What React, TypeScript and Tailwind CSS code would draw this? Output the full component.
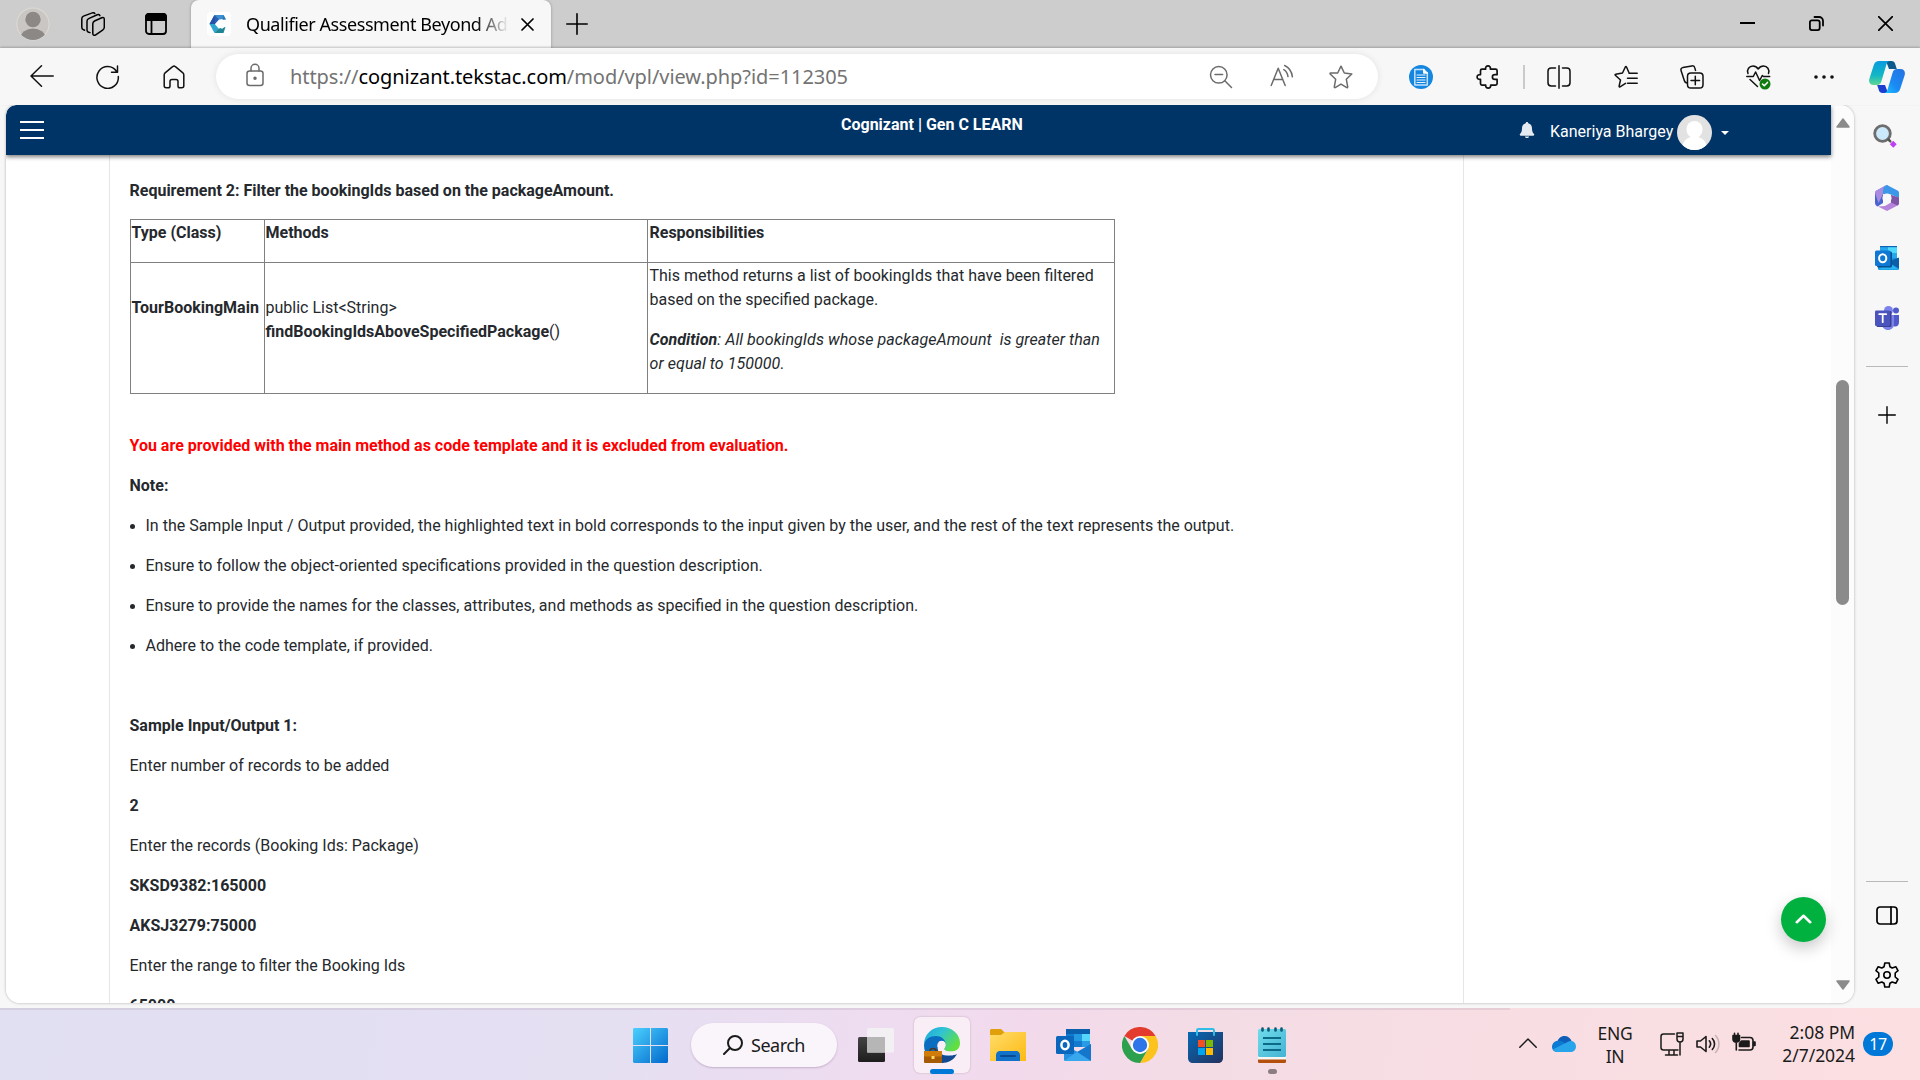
import React from "react";

type IconProps = {
  className: string;
  children: React.ReactNode;
  box?: string;
  stroke?: string;
  width?: number;
};

function Icon({ className, children, box = "0 0 24 24", stroke = "currentColor", width = 1.5 }: IconProps) {
  return (
    <svg
      className={"block shrink-0 " + className}
      viewBox={box}
      fill="none"
      stroke={stroke}
      strokeWidth={width}
      strokeLinecap="round"
      strokeLinejoin="round"
    >
      {children}
    </svg>
  );
}

function TabStrip() {
  return (
    <div className="flex h-12 items-start bg-[#cdcdcd] text-black">
      <Icon className="ml-4 mt-[7px] h-[34px] w-[34px]" box="0 0 34 34" stroke="none">
        <clipPath id="profile">
          <circle cx="17" cy="17" r="16" />
        </clipPath>
        <circle cx="17" cy="17" r="16.6" fill="#dedbd6" />
        <circle cx="17" cy="17" r="15.6" fill="#c9c6c3" />
        <g clipPath="url(#profile)">
          <circle cx="17" cy="12.5" r="7.7" fill="#8b8886" />
          <ellipse cx="17" cy="31" rx="12.5" ry="9.5" fill="#8b8886" />
        </g>
      </Icon>
      <Icon className="ml-[31px] mt-3 h-6 w-6">
        <path d="M11.800 11.800c0-1.300.6-2.200 1.700-2.800l7.300-3.300c1.400-.6 2.500.1 2.500 1.600v7.900c0 1.300-.6 2.200-1.700 2.900l-6.900 4.800c-1.500 1-2.900.3-2.900-1.500z" />
        <path d="M9 20.600 7.600 20.200C6.500 19.900 6 19 6 17.900V9.300c0-1.200.6-2.200 1.700-2.700l8.500-3.800c1.200-.5 2.200-.1 2.700.8" />
        <path d="M3.600 18.200 2.300 17.600C1.300 17.200.8 16.300.8 15.200V6.800c0-1.200.6-2.200 1.700-2.700L11.300.9c1.200-.4 2-.1 2.500.5" />
      </Icon>
      <Icon className="ml-10 mt-[13px] h-[22px] w-[22px]" box="0 0 22 22" width={1.8}>
        <rect x="1" y="1" width="20" height="20" rx="3" />
        <path d="M1 7V4a3 3 0 0 1 3-3h14a3 3 0 0 1 3 3v3z" fill="currentColor" />
        <path d="M6.500 7v14" />
      </Icon>
      <div className="relative ml-6 flex h-[49px] w-[360px] items-start rounded-t-[8px] bg-[#f7f7f7] shadow-[0_0_3px_rgba(0,0,0,0.3)] [clip-path:inset(0_-4px_0_-4px)]">
        <div className="ml-4 mt-3 flex h-6 w-6 items-center justify-center rounded-[4px] bg-white">
          <Icon className="h-5 w-5" box="0 0 20 20" stroke="none">
            <path d="M5.500 1h9L10 5.500 6 10H.5z" fill="#2b5fb4" />
            <path d="M5.500 1 .5 10l5.500 4V7z" fill="#2353a8" />
            <path d="M5.500 1h9l2 4-6.500.5z" fill="#3c8fd0" />
            <path d="M.5 10h5.300l4.200 5-4.500 4z" fill="#2da5cf" />
            <path d="M10 14.500 16.500 13l-2 6h-9z" fill="#1f8593" />
            <path d="M14.500 1 17 5.500l-4 .5z" fill="#2f7bb8" />
            <path d="M13 5 18.500 10 13 15 7.500 10z" fill="#fff" />
          </Icon>
        </div>
        <div className="ml-[15px] mt-[9px] h-[30px] w-[268px] whitespace-nowrap bg-gradient-to-r from-black from-[86%] to-transparent to-[98%] bg-clip-text font-['Noto_Sans',sans-serif] text-[18px] leading-[30px] tracking-[-0.42px] text-transparent">
          Qualifier Assessment Beyond Adv
        </div>
        <Icon className="ml-[7px] mt-[18px] h-[13px] w-[13px]" box="0 0 13 13" width={1.7}>
          <path d="M1 1l11 11M12 1 1 12" />
        </Icon>
      </div>
      <Icon className="ml-[15px] mt-[13px] h-[22px] w-[22px]" box="0 0 22 22" width={1.6}>
        <path d="M11 .8v20.400M.8 11h20.400" />
      </Icon>
      <div className="flex-1" />
      <Icon className="mt-[22px] h-[2px] w-[15px]" box="0 0 15 2" width={2}>
        <path d="M0 1h15" />
      </Icon>
      <Icon className="ml-[54px] mt-4 h-[15px] w-[15px]" box="0 0 15 15" width={1.8}>
        <rect x=".9" y="4.300" width="9.800" height="9.800" rx="2" />
        <path d="M5.500 1h4.500a4 4 0 0 1 4 4v4.500" />
      </Icon>
      <Icon className="ml-[54px] mr-[27px] mt-4 h-[15px] w-[15px]" box="0 0 15 15" width={1.7}>
        <path d="M.6.600 14.400 14.400M14.400.600.600 14.400" />
      </Icon>
    </div>
  );
}

function Toolbar() {
  return (
    <div className="relative flex h-[57px] items-center bg-[#f7f7f7] pt-px text-[#111] shadow-[0_-1px_2px_rgba(0,0,0,0.22)]">
      <Icon className="-mt-0.5 ml-[30px] h-6 w-6">
        <path d="M23.200 12H1M11.500 1.800 1 12l10.500 10.200" />
      </Icon>
      <Icon className="-mt-px ml-[42px] h-6 w-6">
        <path d="M22.300 11.500A10.700 10.900 0 1 1 20.600 6.500M21.500 1v6.200h-6" />
      </Icon>
      <Icon className="-mt-px ml-[42px] h-6 w-6">
        <path d="M2.200 9.800c0-.8.300-1.500.9-2L10.600 1.700c.8-.7 2-.7 2.800 0l7.500 6.100c.6.500.9 1.200.9 2V20.700c0 1.100-.8 2-2 2h-2c-1 0-1.800-.8-1.800-1.800v-4.400c0-1.200-.8-2-2-2h-4c-1.200 0-2 .8-2 2v4.400c0 1-.8 1.800-1.800 1.800h-2c-1.200 0-2-.9-2-2z" />
      </Icon>
      <div className="-mt-px ml-[30px] flex h-[45px] w-[1162px] items-center rounded-full bg-white text-[#6b6b6b] shadow-[0_0_7px_rgba(0,0,0,0.09)]">
        <Icon className="-mt-[3px] ml-[30px] h-6 w-[18px]" box="0 0 18 24">
          <rect x="1" y="8" width="16" height="14.500" rx="2.500" />
          <path d="M5 8V5.300a4 4 0 0 1 8 0V8" />
          <circle cx="9" cy="15.200" r="1" fill="currentColor" />
        </Icon>
        <div className="ml-[26px] flex-1 whitespace-nowrap font-['Noto_Sans',sans-serif] text-[20px] leading-8 tracking-[-0.06px] text-[#737373]">
          https://<span className="text-black">cognizant.tekstac.com</span>/mod/vpl/view.php?id=112305
        </div>
        <Icon className="h-6 w-6">
          <circle cx="9.800" cy="9.800" r="8.300" />
          <path d="m15.800 15.800 6.700 6.700M6 9.600h7.600" />
        </Icon>
        <Icon className="-mt-0.5 ml-[37px] h-6 w-6">
          <path d="M1.200 21.500 8.200 4.200l7 17.300M3.800 15.500h8.800M14.600 1.500c4.200 1.900 7.200 6 7.800 11.300M13.800 5.600c2.200 1.300 3.700 3.800 4.200 7" />
        </Icon>
        <Icon className="mx-[25px] ml-[35px] h-6 w-6">
          <path d="M12 1.200 15.300 8l7.500 1-5.500 5.200 1.400 7.700c.1.700-.4.900-.9.700L12 19.100l-5.800 3.500c-.6.200-1-.2-.9-.7l1.400-7.700L1.200 9c-.4-.5-.1-.9.400-1L8.700 8z" />
        </Icon>
      </div>
      <Icon className="-mt-px ml-[31px] h-6 w-6">
        <circle cx="12" cy="12" r="12" fill="#1687df" stroke="none" />
        <path d="M5.800 4.500h9l3.500 3.500v12H5.800z" stroke="#c5e2fb" width="1" />
        <path d="M14.800 4.500V8h3.500" fill="#fff" stroke="#fff" />
        <path d="M8 10h8M8 12.500h8M8 15h8M8 17.500h8" stroke="#e6f3ff" strokeWidth="1.200" />
      </Icon>
      <Icon className="-mt-px ml-[43px] h-6 w-6" width={1.7}>
        <path d="M6 4.200h3.600C9.300 2 10.400.9 12 .9s2.700 1.100 2.400 3.300h5.200c.9 0 1.500.6 1.500 1.500v4H19c-1.700 0-2.600 1-2.600 2.300s.9 2.400 2.600 2.400h2.100v4.200c0 .9-.6 1.500-1.500 1.500h-4.900c.2 2-.9 3-2.500 3s-2.700-1-2.500-3H6c-.9 0-1.500-.6-1.500-1.500v-4.200C2.300 14.600 1.100 13.600 1.100 12s1.200-2.500 3.400-2.300v-4c0-.9.6-1.500 1.500-1.500z" />
      </Icon>
      <div className="ml-[23px] h-6 w-[2px] bg-[#cacaca]" />
      <Icon className="-mt-px ml-[22px] h-6 w-6">
        <path d="M8.500 3H4.200C2.300 3 1 4.300 1 6.200v11.600C1 19.700 2.300 21 4.200 21h4.300M15.500 3h4.300C21.700 3 23 4.300 23 6.200v11.600c0 1.900-1.300 3.200-3.200 3.200h-4.300M12 .8v22.400" />
      </Icon>
      <Icon className="-mt-px ml-[43px] h-6 w-6">
        <path d="M11.500 18.400 6 21.800c-.5.300-1 0-.9-.7L6.500 15 1.300 10.200c-.4-.5-.2-1 .4-1L8.500 8l2.800-6c.3-.6.900-.6 1.200 0l2.400 5.500M15 8.300h8.200M13.500 13.300h9.700M13.500 18.300h9.700" />
      </Icon>
      <Icon className="-mt-px ml-[42px] h-6 w-6">
        <rect x="7.500" y="8" width="15.500" height="15" rx="3.300" />
        <path d="M15.300 11.200v8.600M11 15.500h8.600M7 18c-1.400-.2-2.400-1.100-2.700-2.500L1.100 5.700c-.5-1.500.2-2.700 1.700-3.100L11.800.9c1.500-.3 2.700.5 3 2l.7 2.500" />
      </Icon>
      <Icon className="ml-[42px] h-[26px] w-[25px]" box="0 0 25 26">
        <path d="M2 9.500C.5 5.500 3.200 2 7 2c2.500 0 4 1.300 5.200 3C13.400 3.300 15 2 17.500 2c3.800 0 6.300 3.500 5 7.500M.8 12.500h6.500L9.600 8l4 8.500 2.700-5 1.200 1h6.200M4 15.500l7.500 7" />
        <circle cx="19" cy="20" r="5.500" fill="#107c10" stroke="none" />
        <path d="m16.500 20 1.800 1.800 3.200-3.400" stroke="#fff" />
      </Icon>
      <Icon className="-mt-px ml-[41px] h-6 w-6" stroke="none">
        <circle cx="4" cy="12" r="1.800" fill="#111" />
        <circle cx="12" cy="12" r="1.800" fill="#111" />
        <circle cx="20" cy="12" r="1.800" fill="#111" />
      </Icon>
      <Icon className="ml-[33px] h-8 w-9" box="0 0 36 32" stroke="none">
        <defs>
          <linearGradient id="cpA" x1="0" y1="0" x2="0" y2="1">
            <stop offset="0" stopColor="#0a9be0" />
            <stop offset=".6" stopColor="#12b7c4" />
            <stop offset="1" stopColor="#5fd890" />
          </linearGradient>
          <linearGradient id="cpB" x1="1" y1="0" x2="0" y2="1">
            <stop offset="0" stopColor="#2672e0" />
            <stop offset=".6" stopColor="#1a8bf5" />
            <stop offset="1" stopColor="#1cc8ff" />
          </linearGradient>
        </defs>
        <path d="M17 0h5.500c2 0 3 1 3.600 2.800L27.800 8H20z" fill="#0d5a8c" />
        <path d="M19 32h-5.500c-2 0-3-1-3.600-2.800L8.200 24H16z" fill="#1c3fd0" />
        <path d="M10 0h11c-2 0-3 1.500-3.600 3.500L12.500 20c-.7 2.500-2 4-4.500 4H4.500C1 24-.5 21.500.3 18L4.800 4C5.700 1.500 7.500 0 10 0z" fill="url(#cpA)" />
        <path d="M26 32H15c2 0 3-1.500 3.600-3.500L23.500 12c.7-2.500 2-4 4.500-4h3.500c3.500 0 5 2.500 4.200 6l-4.500 14c-.9 2.500-2.700 4-5.200 4z" fill="url(#cpB)" />
      </Icon>
    </div>
  );
}

function PageHeader() {
  return (
    <header className="relative z-10 flex h-[50px] w-[1825px] shrink-0 items-center rounded-tl-[10px] bg-[#003366] font-[Roboto,sans-serif] text-white shadow-[0_2px_4px_rgba(0,0,0,0.5)]">
      <div className="ml-[14px] flex w-6 flex-col gap-[6px]">
        <div className="h-[2px] bg-white" />
        <div className="h-[2px] bg-white" />
        <div className="h-[2px] bg-white" />
      </div>
      <div className="-mt-[11px] ml-[797px] w-[186px] whitespace-nowrap text-[16px] font-bold leading-6">Cognizant | Gen C LEARN</div>
      <div className="flex-1" />
      <Icon className="h-4 w-4" box="0 0 16 17" stroke="none">
        <path d="M8 0c.8 0 1.300.5 1.300 1.200C12 1.800 13.300 4 13.300 6.500c0 4 1 5.200 2.100 6.300.7.700.3 1.700-.7 1.700H1.300c-1 0-1.400-1-.7-1.700 1.100-1.100 2.100-2.300 2.100-6.300C2.700 4 4 1.800 6.700 1.200 6.700.5 7.200 0 8 0zM5.800 15.300h4.400c-.2 1.100-1.100 1.700-2.200 1.700s-2-.6-2.200-1.700z" fill="#e5eaf0" />
      </Icon>
      <div className="ml-[15px] mt-[4px] w-[127px] whitespace-nowrap text-[16px] leading-6">Kaneriya Bhargey</div>
      <Icon className="mt-[4px] h-[35px] w-[35px]" box="0 0 35 35" stroke="none">
        <clipPath id="user">
          <circle cx="17.500" cy="17.500" r="17.500" />
        </clipPath>
        <g clipPath="url(#user)">
          <rect width="35" height="35" fill="#e2e2e2" />
          <rect x="9.500" y="6" width="16" height="17" rx="8" fill="#fff" />
          <ellipse cx="17.500" cy="32" rx="12" ry="10.500" fill="#fff" />
        </g>
      </Icon>
      <Icon className="ml-[9px] mr-[102px] mt-1.5 h-1 w-2" box="0 0 8 4" stroke="none">
        <path d="M0 0h8L4 4z" fill="#fff" />
      </Icon>
    </header>
  );
}

const notes = [
  { text: "In the Sample Input / Output provided, the highlighted text in bold corresponds to the input given by the user, and the rest of the text represents the output." },
  { text: "Ensure to follow the object-oriented specifications provided in the question description." },
  { text: "Ensure to provide the names for the classes, attributes, and methods as specified in the question description." },
  { text: "Adhere to the code template, if provided." },
];

const sample = [
  { text: "Sample Input/Output 1:", bold: true },
  { text: "Enter number of records to be added", bold: false },
  { text: "2", bold: true },
  { text: "Enter the records (Booking Ids: Package)", bold: false },
  { text: "SKSD9382:165000", bold: true },
  { text: "AKSJ3279:75000", bold: true },
  { text: "Enter the range to filter the Booking Ids", bold: false },
  { text: "65000", bold: true },
];

function Article() {
  return (
    <article className="ml-[103px] h-full w-[1355px] border-x border-[#e6e6e6] pl-[19.5px] pt-6 font-[Roboto,sans-serif] text-[16px] leading-6 text-[#25292d]">
      <p className="font-bold">Requirement 2: Filter the bookingIds based on the packageAmount.</p>
      <table className="mt-4 w-[984px] table-fixed border-collapse">
        <colgroup>
          <col className="w-[134px]" />
          <col className="w-[383px]" />
          <col className="w-[467px]" />
        </colgroup>
        <tbody>
          <tr className="h-[43px] align-top">
            <td className="border border-[#808080] px-px pt-px font-bold">Type (Class)</td>
            <td className="border border-[#808080] px-px pt-px font-bold">Methods</td>
            <td className="border border-[#808080] px-[2px] pt-px font-bold">Responsibilities</td>
          </tr>
          <tr className="h-[131px] align-top">
            <td className="whitespace-nowrap border border-[#808080] px-px pt-[33px] font-bold">TourBookingMain</td>
            <td className="border border-[#808080] px-px pt-[33px]">
              public List&lt;String&gt;
              <br />
              <b>findBookingIdsAboveSpecifiedPackage</b>()
            </td>
            <td className="whitespace-nowrap border border-[#808080] px-[2px] pt-px">
              <p>
                This method returns a list of bookingIds that have been filtered
                <br />
                based on the specified package.
              </p>
              <p className="mt-4 italic tracking-[0.06px]">
                <b>Condition</b>: All bookingIds whose packageAmount&nbsp; is greater than
                <br />
                or equal to 150000.
              </p>
            </td>
          </tr>
        </tbody>
      </table>
      <p className="mt-10 font-bold text-[#ff0000]">You are provided with the main method as code template and it is excluded from evaluation.</p>
      <p className="mt-4 font-bold">Note:</p>
      <ul>
        {notes.map((n) => (
          <li key={n.text} className="mt-4 flex items-center whitespace-nowrap">
            <span className="mr-[11px] h-[5px] w-[5px] rounded-full bg-[#25292d]" />
            {n.text}
          </li>
        ))}
      </ul>
      <div className="mt-14 flex flex-col gap-4">
        {sample.map((s) => (
          <p key={s.text} className={s.bold ? "font-bold" : ""}>
            {s.text}
          </p>
        ))}
      </div>
    </article>
  );
}

function Page() {
  return (
    <main className="ml-1.5 flex h-[898px] w-[1848px] shrink-0 overflow-hidden rounded-[14px] rounded-tl-[10px] bg-[#fcfcfc] shadow-[0_0_3px_rgba(0,0,0,0.3)]">
      <div className="relative flex w-[1825px] flex-col bg-white">
        <PageHeader />
        <div className="min-h-0 flex-1 overflow-hidden">
          <Article />
        </div>
        <button className="absolute bottom-[61px] right-[5px] flex h-[45px] w-[45px] items-center justify-center rounded-full bg-[#00b140] shadow-[0_6px_16px_rgba(0,0,0,0.22)]">
          <Icon className="-mt-0.5 h-[10px] w-[17px]" box="0 0 17 10" stroke="#fff" width={2.600}>
            <path d="M1.800 8.200 8.500 1.800l6.700 6.400" />
          </Icon>
        </button>
      </div>
      <div className="flex w-[23px] flex-col items-center bg-[#fcfcfc] text-[#8b8b8b]">
        <Icon className="mt-[13px] h-[10px] w-[14px]" box="0 0 14 10" width={1.500}>
          <path d="M7 1 13 9H1z" fill="currentColor" />
        </Icon>
        <div className="mt-[252px] h-[225px] w-[13px] rounded-full bg-[#8b8b8b]" />
        <div className="flex-1" />
        <Icon className="mb-[13px] h-[10px] w-[14px]" box="0 0 14 10" width={1.500}>
          <path d="M1 1h12L7 9z" fill="currentColor" />
        </Icon>
      </div>
    </main>
  );
}

function OutlookSmall() {
  return (
    <>
      <path d="M5 1.500C5 .7 5.500 0 6.500 0h14c1 0 1.500.7 1.500 1.500V13H5z" fill="#28a8ea" />
      <path d="M13 1h9v6h-9z" fill="#50d9ff" />
      <path d="M5 0h17v1.200H5z" fill="#0f65b4" />
      <path d="M3 12h21v10.500c0 .8-.6 1.500-1.500 1.500h-18C3.600 24 3 23.300 3 22.500z" fill="#1490df" />
      <path d="M24 11.500v11L13 16z" fill="#0a5fa8" />
      <path d="M3 23.500 14 17l10 6.500z" fill="#28b5f4" />
      <rect x="2" y="5.500" width="15" height="16" rx="1.500" fill="#07518f" />
      <rect x="0" y="4.500" width="15.500" height="15.500" rx="1.500" fill="#0f78d4" />
      <ellipse cx="7.700" cy="12.200" rx="3.600" ry="4" stroke="#fff" strokeWidth="2" />
    </>
  );
}

function SideBar() {
  return (
    <aside className="ml-3 flex h-full w-[42px] flex-col items-center text-black">
      <Icon className="mr-[3px] mt-[19px] h-[25px] w-[25px]" box="0 0 25 25" stroke="none">
        <circle cx="9.500" cy="9.500" r="7.800" fill="#cbe9fb" stroke="#6d6d6d" strokeWidth="2.800" />
        <path d="m15.500 15.500 1.800 1.800" stroke="#555" strokeWidth="2.500" />
        <path d="m18.500 18.500 3.500 3.500" stroke="#bf3df5" strokeWidth="4.800" strokeLinecap="butt" />
      </Icon>
      <Icon className="mt-9 h-[26px] w-6" box="0 0 24 26" stroke="none">
        <path d="M12 0 1.500 5.500C.5 6 0 7 0 8v10c0 1.500 1 3 2.500 3.500L8 17V9l7.500-6z" fill="#8e7be0" />
        <path d="M0 16c0 3 .8 4 2.800 5.200L8 18V9L0 8z" fill="#4a64cf" />
        <path d="M9.500 1 12 0l10.500 5.500c1 .5 1.500 1.500 1.500 2.500v5l-8-3.500L8 9V4z" fill="#3b97e8" />
        <path d="M0 8c0-1 .5-2 1.500-2.500L9.500 1C8 3 8 5 8 9l-4.500 9z" fill="#a98be0" />
        <path d="M3 21.500 12 26l10.500-5.500c1-.5 1.500-1.500 1.500-2.500v-5l-8-3v7.500L10 21z" fill="#b583dc" />
        <path d="M24 12.500V18c0 1-.5 1.800-1.500 2.500L16 17.500V10z" fill="#7e56a7" />
        <circle cx="12" cy="13" r="4.600" fill="#f7f7f7" />
      </Icon>
      <Icon className="mt-[35px] h-6 w-6">
        <g stroke="none">
          <OutlookSmall />
        </g>
      </Icon>
      <Icon className="mt-9 h-6 w-6" stroke="none">
        <circle cx="13.500" cy="4.500" r="4.500" fill="#7b83eb" />
        <circle cx="21" cy="4.500" r="3" fill="#5059c9" />
        <path d="M16 9h8v7c0 3-1.500 4.500-4 4.500S16 19 16 16z" fill="#5059c9" />
        <path d="M7 9h12v9c0 3.500-2.500 6-6 6s-6-2.500-6-6z" fill="#7b83eb" />
        <rect x="1.500" y="5" width="15" height="16" rx="1.300" fill="#3a3f8f" />
        <rect x="0" y="4.500" width="15" height="15.500" rx="1.300" fill="#4b53bc" />
        <path d="M4.200 8.200h7M7.700 8.200v8" stroke="#fff" strokeWidth="1.800" />
      </Icon>
      <div className="mt-9 h-px w-full bg-[#b9b9b9]" />
      <Icon className="mr-px mt-[39px] h-[18px] w-[18px]" box="0 0 18 18" width={1.400}>
        <path d="M9 .7v16.600M.7 9h16.600" />
      </Icon>
      <div className="flex-1" />
      <div className="h-px w-full bg-[#b9b9b9]" />
      <Icon className="mt-6 h-[19px] w-[22px]" box="0 0 22 19" width={1.700}>
        <rect x="1" y="1" width="20" height="17" rx="3" />
        <path d="M15 1v17" />
      </Icon>
      <Icon className="mb-5 mt-[37px] h-[26px] w-6" box="0 0 24 26" width={1.600}>
        <path d="M9.800 1h4.400l.7 3.700 2.300 1.300 3.600-1.300L23 8.600 20.200 11v4l2.800 2.400-2.200 3.900-3.600-1.300-2.300 1.300-.7 3.700H9.800l-.7-3.700L6.800 20l-3.600 1.300L1 17.400 3.800 15v-4L1 8.600l2.200-3.900L6.800 6l2.300-1.300z" />
        <circle cx="12" cy="13" r="3.200" />
      </Icon>
    </aside>
  );
}

function Taskbar() {
  return (
    <footer className="relative flex h-[72px] items-start bg-[linear-gradient(100deg,#e1dff2_0%,#e5dff2_32%,#efdcf0_46%,#f2daec_53%,#f4dce5_63%,#f8dee3_78%,#fbdfe1_100%)] font-['Noto_Sans',sans-serif] text-[#1b1b1b]">
      <div className="absolute left-0 top-0 h-[2px] w-[1510px] bg-[#a08ca0]/20" />
      <Icon className="ml-[633px] mt-5 h-[35px] w-[35px]" box="0 0 35 35" stroke="none">
        <defs>
          <linearGradient id="win" x1="0" y1="0" x2="1" y2="1">
            <stop offset="0" stopColor="#4cd0fe" />
            <stop offset="1" stopColor="#0168cc" />
          </linearGradient>
        </defs>
        <path d="M1 0h16v17H0V1zM18 0h16l1 1v16H18zM0 18h17v17H1l-1-1zM18 18h17v16l-1 1H18z" fill="url(#win)" />
      </Icon>
      <div className="ml-[23px] mt-[15px] flex h-11 w-[146px] items-center rounded-full bg-[#faf5fb] shadow-[0_1px_2px_rgba(120,90,130,0.35)]">
        <Icon className="ml-8 h-5 w-5" box="0 0 20 20" width={2}>
          <circle cx="12" cy="8" r="7" />
          <path d="M7 13 1 19" />
        </Icon>
        <span className="ml-2 text-[18px] leading-6 tracking-[-0.5px]">Search</span>
      </div>
      <Icon className="ml-[21px] mt-5 h-[34px] w-9" box="0 0 36 34" stroke="none">
        <defs>
          <linearGradient id="tv" x1="0" y1="0" x2="0" y2="1">
            <stop offset="0" stopColor="#444" />
            <stop offset="1" stopColor="#1d1d1d" />
          </linearGradient>
        </defs>
        <rect x="0" y="9" width="27" height="25" rx="1.500" fill="url(#tv)" />
        <rect x="9" y="0" width="27" height="24.500" rx="1.500" fill="#f2f0f2" />
        <rect x="9" y="9" width="18" height="15.500" fill="#b7b6b7" />
      </Icon>
      <div className="relative ml-5 mt-[9px] flex h-14 w-14 justify-center rounded-[6px] bg-[#f9edf6] shadow-[0_0_2px_rgba(120,90,110,0.4)]">
        <Icon className="mt-[10px] h-9 w-9" box="0 0 36 36" stroke="none">
          <defs>
            <linearGradient id="edgeTop" x1="0" y1="0" x2="1" y2=".6">
              <stop offset="0" stopColor="#1ba5de" />
              <stop offset=".45" stopColor="#30c3d4" />
              <stop offset="1" stopColor="#62e03c" />
            </linearGradient>
          </defs>
          <path d="M0 18C0 7 8 0 18 0s18 7 18 16c0 6-4 8.500-9 8.500-4 0-7-1-7-2.500 0-1 1.500-2 1.500-4 0-4-4-7-9-7C6 11 1 15 0 18z" fill="url(#edgeTop)" />
          <path d="M0 18C1 12 6 9 12 9c5 0 9.500 3.500 9.500 8 0-2-2-3.200-4-3.200-3 0-4.300 3-4.300 6.200 0 8 8.800 9.500 14.800 8.200C24 33 20 36 16 36 7 36 0 28 0 18z" fill="#0b6dc0" />
          <path d="M13.500 19c-1 9 8 12.500 19.500 8-3 6-9 9-15 9-5-3-7-11-4.500-17z" fill="#124a91" />
          <path d="M21.500 18c0 2-1.500 3-1.500 4 0 2 4.500 3 8.500 2.500 2.500-.3 4.500-1.200 5.500-2-.2 2-.8 3.400-1.700 4.800C25 29.500 14 28 14 19.500c0-3 1.500-5.500 4-5.500 2 0 3.500 1.500 3.500 4z" fill="#f9edf6" />
          <path d="M6 24c0-2 1-2.500 3-2.500s3 .5 3 2.500" stroke="#4b3520" strokeWidth="1.500" />
          <rect x="0" y="24" width="18" height="12" rx="1" fill="#a65a05" />
          <rect x="0" y="24" width="18" height="5.500" rx="1" fill="#cf7c0a" />
          <rect x="7.500" y="29" width="3" height="3" fill="#ffd75a" />
        </Icon>
        <div className="absolute -bottom-px left-4 h-[5px] w-6 rounded-full bg-[#0078d7]" />
      </div>
      <Icon className="ml-5 mt-[21px] h-8 w-9" box="0 0 36 32" stroke="none">
        <defs>
          <linearGradient id="folder" x1="0" y1="0" x2="1" y2="1">
            <stop offset="0" stopColor="#ffdc6b" />
            <stop offset="1" stopColor="#fdba12" />
          </linearGradient>
        </defs>
        <path d="M0 1.500C0 .6.600 0 1.500 0H10c1 0 1.600.3 2.200 1L15 4H35v5H0z" fill="#e0a00c" />
        <path d="M0 6h11l4-3h21v29H0z" fill="url(#folder)" />
        <path d="M6 32V26c0-2.200 1.500-4 4-4h16c2.500 0 4 1.800 4 4v6z" fill="#1272c9" />
        <path d="M11 27h14" stroke="#0a4a90" strokeWidth="1.800" />
      </Icon>
      <Icon className="ml-[30px] mt-[21px] h-8 w-[35px]" box="0 0 35 32" stroke="none">
        <path d="M10 0h24v17H10z" fill="#1179cf" />
        <path d="M18 5h8v7h-8z" fill="#2399e4" />
        <path d="M26 5h8v7h-8z" fill="#54d7fb" />
        <path d="M18 12h8v6h-8z" fill="#127bd0" />
        <path d="M26 12h8v6h-8z" fill="#2b9ae5" />
        <path d="M10 0h24v5H10z" fill="#0b60ad" />
        <path d="M8 16l14 7 13-8v15.500c0 .8-.7 1.500-1.500 1.500h-24C8.700 32 8 31.300 8 30.500z" fill="#258fe2" />
        <path d="M35 15v17L21 23z" fill="#1477cc" />
        <path d="M8 32 21 23l14 9z" fill="#38a7ee" />
        <rect x="0" y="7" width="18" height="18" rx="1.500" fill="#0a67bc" />
        <ellipse cx="9" cy="16" rx="3.600" ry="4.300" stroke="#fff" strokeWidth="2.500" />
      </Icon>
      <Icon className="ml-[31px] mt-[19px] h-9 w-9" box="0 0 36 36" stroke="none">
        <path d="M18 18 2.400 9A18 18 0 0 1 33.600 9z" fill="#e33b2e" />
        <path d="M18 18h0L33.600 9A18 18 0 0 1 18 36l7.800-13.500z" fill="#fcc31e" />
        <path d="M18 9h15.600L34 10 26 22.500z" fill="#fcc31e" />
        <path d="M2.400 9 10.200 22.500 18 27l7.800-4.500L18 36A18 18 0 0 1 2.400 9z" fill="#2da04e" />
        <circle cx="18" cy="18" r="9" fill="#fff" />
        <circle cx="18" cy="18" r="7.200" fill="#2f75ea" />
      </Icon>
      <Icon className="ml-[30px] mt-5 h-[35px] w-[35px]" box="0 0 35 35" stroke="none">
        <defs>
          <linearGradient id="store" x1="0" y1="0" x2="1" y2="1">
            <stop offset="0" stopColor="#0669b6" />
            <stop offset="1" stopColor="#24315e" />
          </linearGradient>
        </defs>
        <path d="M0 4h35v26c0 3-2 5-5 5H5c-3 0-5-2-5-5z" fill="url(#store)" />
        <path d="M9 7V2.500C9 1.500 9.500 1 10.500 1h14c1 0 1.500.5 1.500 1.500V7" stroke="#31bce8" strokeWidth="2" />
        <path d="M10 12h7v7h-7z" fill="#f25022" />
        <path d="M18 12h7v7h-7z" fill="#7fba00" />
        <path d="M10 20h7v7h-7z" fill="#00a4ef" />
        <path d="M18 20h7v7h-7z" fill="#ffb900" />
      </Icon>
      <div className="ml-[35px] mt-[19px] flex w-7 flex-col items-center">
        <Icon className="h-9 w-7" box="0 0 28 36" stroke="none">
          <defs>
            <linearGradient id="pad" x1="0" y1="0" x2="1" y2="1">
              <stop offset="0" stopColor="#6fdcec" />
              <stop offset="1" stopColor="#45b3d3" />
            </linearGradient>
          </defs>
          <rect x="0" y="28" width="28" height="8" rx="1.500" fill="#b4500c" />
          <rect x="0" y="26" width="28" height="6.500" fill="#f6f6f6" />
          <rect x="0" y="2" width="28" height="28" rx="1.500" fill="url(#pad)" />
          <path d="M4.500 1.500v2M10.500 1.500v2M17.500 1.500v2M23.500 1.500v2" stroke="#0d5873" strokeWidth="2.600" />
          <path d="M5 11h18M5 17h18M5 23h18" stroke="#0b6a86" strokeWidth="1.800" strokeLinecap="butt" />
        </Icon>
        <div className="mt-1.5 h-[5px] w-[9px] rounded-full bg-[#8c7d82]" />
      </div>
      <div className="flex-1" />
      <Icon className="mt-[30px] h-[10px] w-[18px]" box="0 0 18 10" width={1.500}>
        <path d="M.8 9.200 9 1l8.200 8.200" />
      </Icon>
      <Icon className="ml-[15px] mt-7 h-4 w-6" box="0 0 24 16" stroke="none">
        <path d="M5 7c.8-4.500 4-7 7.500-7 3.300 0 6 2 7 5L14 11z" fill="#0f5fb8" />
        <path d="M5.500 4.800c3-.5 5 .5 7 2L16 10 5 16C2 16 0 13.700 0 10.800S2.300 5.200 5.500 4.800z" fill="#0c7ad3" />
        <path d="M19 5c3 0 5 2.500 5 5.500S21.800 16 19 16H5c-1.700 0-3.300-1-4.200-2.400L15.500 6C16.500 5.300 17.700 5 19 5z" fill="#28a4ea" />
      </Icon>
      <div className="ml-[17px] mt-[14px] w-11 text-center text-[17.5px] leading-[23px] tracking-[-0.3px]">
        ENG
        <br />
        IN
      </div>
      <Icon className="ml-[23px] mt-6 h-6 w-6" width={1.500}>
        <path d="M14.500 2H3.500C2 2 1 3 1 4.500v11C1 17 2 18 3.500 18H18M9 18v5M14 18v5M5.500 23h12M20 10v13M17 1h6v6c0 1.800-1 3-3 3s-3-1.200-3-3zM17 4.500h6" />
      </Icon>
      <Icon className="ml-3 mt-6 h-6 w-6" width={1.600}>
        <path d="M1 9v6h3.500l5.500 4.500v-15L4.500 9zM13.300 8.800c1.500 1.800 1.500 4.600 0 6.400M16.300 6.500c3 3.200 3 7.800 0 11" />
        <path d="M19.500 3.500c4.500 4.800 4.500 12.200 0 17" stroke="#c8b3b5" />
      </Icon>
      <Icon className="ml-3 mt-6 h-6 w-6" width={1.600}>
        <path d="M9.500 5.500H18c1.800 0 3 1.200 3 3v6.500c0 1.800-1.200 3-3 3H7" />
        <path d="M9.500 9h7.500v5.500H7.500V11.500z" fill="currentColor" />
        <path d="M21.500 10h1.500v3.500h-1.500zM1 3.500h6.500v4c0 1.500-1.200 2.500-3.200 2.500S1 9 1 7.500zM2.500 1.200v2M6 1.200v2M4.300 9v9" fill="currentColor" />
      </Icon>
      <div className="ml-3 mt-[13px] w-[87px] whitespace-nowrap text-right text-[17.5px] leading-[23px] tracking-[-0.05px]">
        2:08 PM
        <br />
        2/7/2024
      </div>
      <div className="ml-2 mr-[27px] mt-6 flex h-6 w-[30px] items-center justify-center rounded-full bg-[#0078d7] text-[16px] leading-6 tracking-[-0.5px] text-white">17</div>
    </footer>
  );
}

export default function App() {
  return (
    <div className="flex h-[1080px] w-[1920px] flex-col overflow-hidden bg-[#f7f7f7]">
      <TabStrip />
      <Toolbar />
      <div className="flex h-[903px]">
        <Page />
        <SideBar />
      </div>
      <Taskbar />
    </div>
  );
}
